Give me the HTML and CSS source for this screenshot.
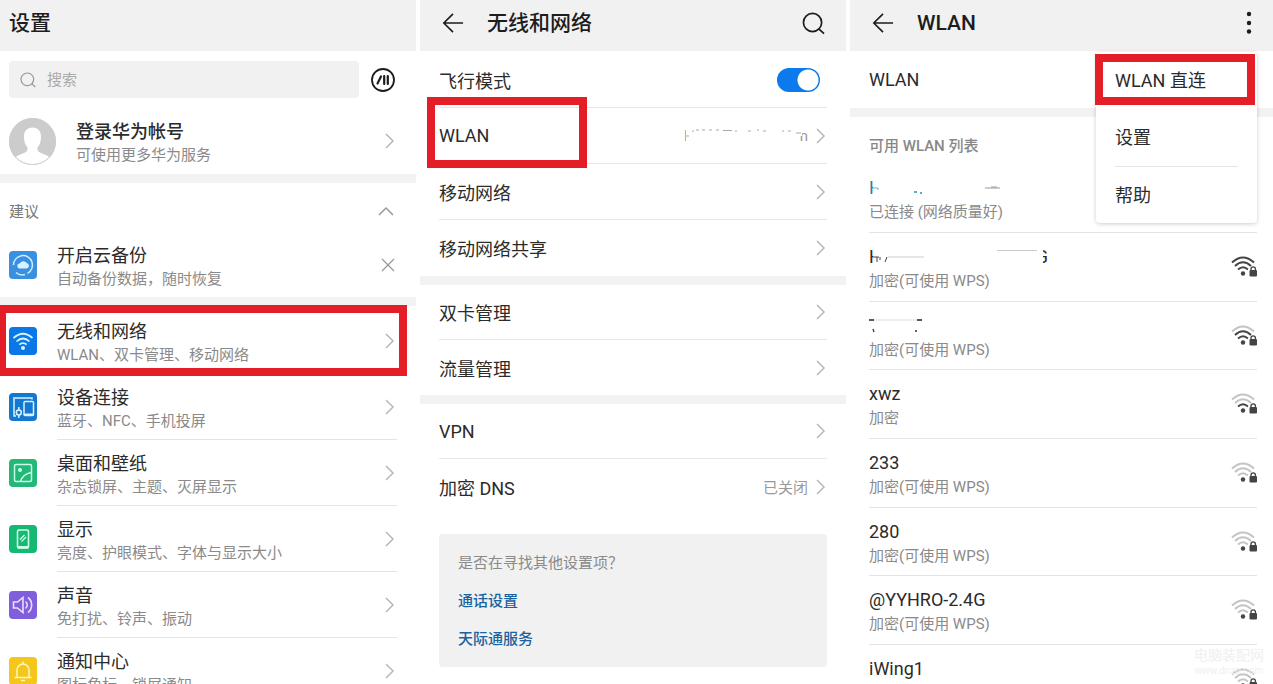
FILE: index.html
```html
<!DOCTYPE html>
<html lang="zh-CN">
<head>
  <meta charset="UTF-8">
  <meta name="viewport" content="width=device-width, initial-scale=1.0">
  <title>设置</title>
  <link rel="stylesheet" href="styles.css">
</head>
<body>

  <!-- Shared icons -->
  <svg class="sprite" aria-hidden="true">
    <symbol id="i-next" viewBox="0 0 10 18"><path d="M1 2l7 7-7 7" fill="none" stroke="currentColor" stroke-width="1.5"/></symbol>
    <symbol id="i-back" viewBox="0 0 24 24"><path d="M12 2L2 12l10 10M2 12h21" fill="none" stroke="currentColor" stroke-width="1.8"/></symbol>
    <symbol id="i-search" viewBox="0 0 24 24"><circle cx="11" cy="11" r="9.5" fill="none" stroke="currentColor" stroke-width="1.8"/><path d="M17.5 17.5l5.5 5" fill="none" stroke="currentColor" stroke-width="1.8"/></symbol>
    <symbol id="i-signal" viewBox="0 0 26 22">
      <g fill="none" stroke-width="2">
        <path class="arc3" d="M1 6.500Q12 -3.500 23 6.500"/>
        <path class="arc2" d="M4 10Q12 2.500 20 10"/>
        <path class="arc1" d="M7 13.500Q12 9 17 13.500"/>
      </g>
      <circle cx="12" cy="17.500" r="2.200" fill="#444"/>
      <path d="M17.500 12.500h8.500v8h-8.500z" fill="#fff"/>
      <rect x="18.500" y="14" width="7.500" height="6.500" rx="1" fill="#444"/>
      <path d="M20 14.500v-1.500a2.200 2.200 0 0 1 4.400 0v1.500" fill="none" stroke="#444" stroke-width="1.300"/>
    </symbol>
  </svg>

  <main class="screens">

    <!-- Settings home -->
    <section class="screen home">
      <header class="bar">
        <h1>设置</h1>
      </header>

      <div class="search">
        <label class="search-box">
          <svg class="search-icon" width="16" height="16"><use href="#i-search"/></svg>
          <input type="search" placeholder="搜索" aria-label="搜索">
        </label>
        <button class="voice" aria-label="智能助手">
          <svg width="24" height="24" viewBox="0 0 24 24">
            <circle cx="12" cy="12" r="11" fill="none" stroke="#1d1d1d" stroke-width="1.800"/>
            <path d="M6.500 15.500L10 8.500M13.200 8v8M16.800 8v8" fill="none" stroke="#1d1d1d" stroke-width="2.200" stroke-linecap="round"/>
          </svg>
        </button>
      </div>

      <a class="item account" href="#account">
        <svg class="avatar" width="47" height="47" viewBox="0 0 47 47">
          <circle cx="23.500" cy="23.500" r="23.500" fill="#ccc"/>
          <path d="M23.500 9.500c-5.500 0-8.500 3.500-8.500 9 0 5 1 8 3.500 11 .3 3-.5 4.500-3.500 5.500-3.500 1.200-6.500 2.500-8.500 4.300a23 23 0 0 0 34 0c-2-1.800-5-3.100-8.500-4.300-3-1-3.800-2.500-3.500-5.500 2.500-3 3.500-6 3.500-11 0-5.500-3-9-8.500-9z" fill="#fff"/>
          <circle cx="23.500" cy="23.500" r="23" fill="none" stroke="#ccc"/>
        </svg>
        <span class="text">
          <strong>登录华为帐号</strong>
          <small>可使用更多华为服务</small>
        </span>
        <svg class="next" width="10" height="18"><use href="#i-next"/></svg>
      </a>

      <div class="divider"></div>

      <button class="suggest">
        建议
        <svg width="16" height="10" viewBox="0 0 16 10"><path d="M1 9l7-7 7 7" fill="none" stroke="#999" stroke-width="1.500"/></svg>
      </button>
      <div class="item backup">
        <svg class="app" width="28" height="28" viewBox="0 0 28 28">
          <rect width="28" height="28" rx="4" fill="#3b8fe0"/>
          <path d="M4.500 14a9.500 9.500 0 1 1 14 8.400M4.500 14v-1M7 21.500a9.500 9.500 0 0 0 9 2" fill="none" stroke="#c9f1ff" stroke-width="1.500"/>
          <path d="M11 17.500a2.500 2.500 0 0 1-.3-5 4 4 0 0 1 7-.5 2.800 2.800 0 0 1 0 5.500z" fill="#d5f4ff"/>
        </svg>
        <span class="text">
          <strong>开启云备份</strong>
          <small>自动备份数据，随时恢复</small>
        </span>
        <button class="close" aria-label="关闭">
          <svg width="14" height="14" viewBox="0 0 14 14"><path d="M1 1l12 12M13 1L1 13" fill="none" stroke="#999" stroke-width="1.300"/></svg>
        </button>
      </div>

      <div class="divider"></div>

      <nav class="menu">
        <a class="item marked" href="#network">
          <svg class="app" width="28" height="28" viewBox="0 0 28 28">
            <rect width="28" height="28" rx="4" fill="#0a78e6"/>
            <path d="M4.500 11q9.500-8.500 19 0M7.500 14.500q6.500-6 13 0M10.300 17.700q3.700-3.300 7.400 0" fill="none" stroke="#d5f4ff" stroke-width="1.700"/>
            <circle cx="14" cy="21" r="2" fill="#d5f4ff"/>
          </svg>
          <span class="text">
            <strong>无线和网络</strong>
            <small>WLAN、双卡管理、移动网络</small>
          </span>
          <svg class="next" width="10" height="18"><use href="#i-next"/></svg>
        </a>
        <a class="item" href="#devices">
          <svg class="app" width="28" height="28" viewBox="0 0 28 28">
            <rect width="28" height="28" rx="4" fill="#1478d2"/>
            <g fill="none" stroke="#d5f4ff" stroke-width="1.500">
              <path d="M23 6.500V5H5v18h2M9.800 14v3M9.800 22v3"/>
              <circle cx="9.800" cy="19.500" r="2.500"/>
              <rect x="15" y="8.500" width="9.500" height="14" rx="1"/>
            </g>
            <path d="M15 20.500h9.500v2.500H15z" fill="#d5f4ff"/>
          </svg>
          <span class="text">
            <strong>设备连接</strong>
            <small>蓝牙、NFC、手机投屏</small>
          </span>
          <svg class="next" width="10" height="18"><use href="#i-next"/></svg>
        </a>
        <a class="item" href="#wallpaper">
          <svg class="app" width="28" height="28" viewBox="0 0 28 28">
            <rect width="28" height="28" rx="4" fill="#23b877"/>
            <rect x="5.500" y="5.500" width="17" height="17" rx="1.500" fill="none" stroke="#c9ffe6" stroke-width="1.500"/>
            <circle cx="11" cy="11" r="2" fill="#c9ffe6"/>
            <path d="M11.500 22.500c1.500-5 5-8 11-9" fill="none" stroke="#c9ffe6" stroke-width="1.500"/>
          </svg>
          <span class="text">
            <strong>桌面和壁纸</strong>
            <small>杂志锁屏、主题、灭屏显示</small>
          </span>
          <svg class="next" width="10" height="18"><use href="#i-next"/></svg>
        </a>
        <a class="item" href="#display">
          <svg class="app" width="28" height="28" viewBox="0 0 28 28">
            <rect width="28" height="28" rx="4" fill="#17b873"/>
            <rect x="8.500" y="5" width="11" height="18" rx="1.500" fill="none" stroke="#c9ffe6" stroke-width="1.600"/>
            <path d="M8.500 21h11v2.500h-11z" fill="#c9ffe6"/>
            <path d="M11 14.500l4.500-4.500M12.500 16.500l4.500-4.500" stroke="#c9ffe6" stroke-width="1.400"/>
          </svg>
          <span class="text">
            <strong>显示</strong>
            <small>亮度、护眼模式、字体与显示大小</small>
          </span>
          <svg class="next" width="10" height="18"><use href="#i-next"/></svg>
        </a>
        <a class="item" href="#sound">
          <svg class="app" width="28" height="28" viewBox="0 0 28 28">
            <rect width="28" height="28" rx="4" fill="#7f5fdb"/>
            <path d="M4.500 11h4l5.500-4.500v15L8.500 17h-4zM16.500 10.500a4.500 4.500 0 0 1 0 7M19 6.500a9.500 9.500 0 0 1 0 15" fill="none" stroke="#ecdcff" stroke-width="1.600"/>
          </svg>
          <span class="text">
            <strong>声音</strong>
            <small>免打扰、铃声、振动</small>
          </span>
          <svg class="next" width="10" height="18"><use href="#i-next"/></svg>
        </a>
        <a class="item" href="#notifications">
          <svg class="app" width="28" height="28" viewBox="0 0 28 28">
            <rect width="28" height="28" rx="4" fill="#f5c61c"/>
            <path d="M5.500 20.500h17M8 20.500V13a6 6 0 0 1 12 0v7.500M14 7V4.500M12 23.500h4" fill="none" stroke="#fff6b8" stroke-width="1.600"/>
          </svg>
          <span class="text">
            <strong>通知中心</strong>
            <small>图标角标、锁屏通知</small>
          </span>
          <svg class="next" width="10" height="18"><use href="#i-next"/></svg>
        </a>
      </nav>
    </section>

    <!-- Wireless and networks -->
    <section class="screen network">
      <header class="bar">
        <button class="back" aria-label="返回"><svg width="22" height="22"><use href="#i-back"/></svg></button>
        <h1>无线和网络</h1>
        <button class="tool" aria-label="搜索"><svg width="23" height="23"><use href="#i-search"/></svg></button>
      </header>

      <div class="rows tall">
        <div class="row">
          <label for="airplane">飞行模式</label>
          <input class="switch" type="checkbox" id="airplane" checked>
        </div>
        <a class="row marked" href="#wlan">
          <span>WLAN</span>
          <span class="value erased">
            H
            <svg width="121" height="18" viewBox="0 0 121 18">
              <path d="M0 0h108v18H0zM108 0h8v9h-8z" fill="#fff"/>
              <path d="M0 9h3M6 4h2M10 3h3M16 3h3M23 3h3M30 3h3M37 3.500h9M49 4h2M62 4h3M71 3h2M77 4h3M96 4h2M102 4h3M110 6h5" stroke="#aaa"/>
            </svg>
            n
          </span>
          <svg class="next" width="10" height="18"><use href="#i-next"/></svg>
        </a>
        <a class="row" href="#mobile">
          <span>移动网络</span>
          <svg class="next" width="10" height="18"><use href="#i-next"/></svg>
        </a>
        <a class="row" href="#tethering">
          <span>移动网络共享</span>
          <svg class="next" width="10" height="18"><use href="#i-next"/></svg>
        </a>
      </div>

      <div class="divider"></div>

      <div class="rows">
        <a class="row" href="#dual-sim">
          <span>双卡管理</span>
          <svg class="next" width="10" height="18"><use href="#i-next"/></svg>
        </a>
        <a class="row" href="#data">
          <span>流量管理</span>
          <svg class="next" width="10" height="18"><use href="#i-next"/></svg>
        </a>
      </div>

      <div class="divider"></div>

      <div class="rows">
        <a class="row" href="#vpn">
          <span>VPN</span>
          <svg class="next" width="10" height="18"><use href="#i-next"/></svg>
        </a>
        <a class="row" href="#dns">
          <span>加密 DNS</span>
          <span class="value">已关闭</span>
          <svg class="next" width="10" height="18"><use href="#i-next"/></svg>
        </a>
      </div>

      <aside class="more">
        <p>是否在寻找其他设置项？</p>
        <a href="#call">通话设置</a>
        <a href="#skytone">天际通服务</a>
      </aside>
    </section>

    <!-- WLAN -->
    <section class="screen wlan">
      <header class="bar">
        <button class="back" aria-label="返回"><svg width="22" height="22"><use href="#i-back"/></svg></button>
        <h1>WLAN</h1>
        <button class="tool" aria-label="更多">
          <svg width="6" height="24" viewBox="0 0 6 24"><g fill="#1d1d1d"><circle cx="3" cy="3" r="2.200"/><circle cx="3" cy="12" r="2.200"/><circle cx="3" cy="20.500" r="2.200"/></g></svg>
        </button>
      </header>

      <div class="current">WLAN</div>
      <div class="divider"></div>
      <h2>可用 WLAN 列表</h2>

      <ul class="spots">
        <li class="connected">
          <span class="spot">
            <strong class="erased">
              H
              <svg width="160" height="18" viewBox="0 0 160 18">
                <path d="M0 0h160v18H0z" fill="#fff"/>
                <path d="M0 9h5v2" fill="none" stroke="#6fb3c8"/>
                <path d="M41 13h3M47 14h2" stroke="#2a8fae" stroke-width="1.500"/>
                <path d="M112 9h15M118 8h6" stroke="#999"/>
              </svg>
            </strong>
            <small>已连接 (网络质量好)</small>
          </span>
        </li>
        <li>
          <span class="spot">
            <strong class="erased">
              H
              <svg width="170" height="18" viewBox="0 0 170 18">
                <path d="M0 0h170v18H0z" fill="#fff"/>
                <path d="M0 9h6M4 9v5M7 9v3M12 14l2-5" stroke="#444" fill="none"/>
                <path d="M15 9h36M124 2.500h40" stroke="#ccc"/>
              </svg>
              G
            </strong>
            <small>加密(可使用 WPS)</small>
          </span>
          <svg class="signal s3" width="26" height="22"><use href="#i-signal"/></svg>
        </li>
        <li>
          <span class="spot">
            <strong class="erased">
              <svg class="dashes" width="54" height="18" viewBox="0 0 54 18">
                <path d="M0 4h5M48 4h5" stroke="#222" stroke-width="1.500"/>
                <path d="M5 4h43" stroke="#ddd"/>
                <path d="M4 13l1 3M46 15h2" stroke="#333" stroke-width="1.300"/>
              </svg>
            </strong>
            <small>加密(可使用 WPS)</small>
          </span>
          <svg class="signal s2" width="26" height="22"><use href="#i-signal"/></svg>
        </li>
        <li>
          <span class="spot"><strong>xwz</strong><small>加密</small></span>
          <svg class="signal s1" width="26" height="22"><use href="#i-signal"/></svg>
        </li>
        <li>
          <span class="spot"><strong>233</strong><small>加密(可使用 WPS)</small></span>
          <svg class="signal" width="26" height="22"><use href="#i-signal"/></svg>
        </li>
        <li>
          <span class="spot"><strong>280</strong><small>加密(可使用 WPS)</small></span>
          <svg class="signal" width="26" height="22"><use href="#i-signal"/></svg>
        </li>
        <li>
          <span class="spot"><strong>@YYHRO-2.4G</strong><small>加密(可使用 WPS)</small></span>
          <svg class="signal" width="26" height="22"><use href="#i-signal"/></svg>
        </li>
        <li>
          <span class="spot"><strong>iWing1</strong><small>加密</small></span>
          <svg class="signal" width="26" height="22"><use href="#i-signal"/></svg>
        </li>
      </ul>

      <div class="popup">
        <a class="marked" href="#direct">WLAN 直连</a>
        <a href="#wlan-settings">设置</a>
        <a href="#help">帮助</a>
      </div>

      <div class="watermark">电脑装配网<small>www.dnzp.com</small></div>
    </section>

  </main>

</body>
</html>
```
FILE: styles.css
```css
*, *::before, *::after {
  box-sizing: border-box;
  margin: 0;
  padding: 0;
}

body {
  font-family: Roboto, "Noto Sans CJK SC", sans-serif;
  font-size: 18px;
  color: #2b2b2b;
  background-color: #fff;
}

a {
  color: inherit;
  text-decoration: none;
}

button {
  font: inherit;
  color: inherit;
  background: none;
  border: none;
  cursor: pointer;
}

svg {
  display: block;
  flex: none;
}

strong {
  font-weight: 400;
}

small {
  font-size: 15px;
  color: #8a8a8a;
}

.sprite {
  position: absolute;
  width: 0;
  height: 0;
}

.screens {
  display: grid;
  grid-template-columns: 416fr 426fr 423fr;
  gap: 4px;
  height: 100vh;
}

.screen {
  position: relative;
  min-width: 0;
  overflow-x: hidden;
  overflow-y: auto;
  scrollbar-width: none;
}

/* Top bar */
.bar {
  display: flex;
  align-items: center;
  height: 51px;
  padding: 0 21px 5px 22px;
  background-color: #f1f1f1;
  color: #1d1d1d;
}

.home .bar {
  padding-left: 9px;
}

.bar h1 {
  font-size: 21px;
  font-weight: 500;
  line-height: 24px;
}

.back {
  margin-right: 23px;
}

.tool {
  margin-left: auto;
}

.divider {
  height: 9px;
  background-color: #f2f2f2;
}

.next {
  color: #b8b8b8;
}

/* Red frame round the entry to tap */
.marked {
  position: relative;
}

.marked::after {
  content: "";
  position: absolute;
  border: 8px solid #e31e26;
  z-index: 2;
}

/* Settings home */
.search {
  display: flex;
  align-items: center;
  gap: 12px;
  padding: 10px 21px 10px 9px;
}

.search-box {
  flex: 1;
  display: flex;
  align-items: center;
  gap: 11px;
  height: 37px;
  padding: 0 11px;
  background-color: #f1f1f1;
  border-radius: 4px;
}

.search-icon {
  color: #999;
}

.search-box input {
  flex: 1;
  min-width: 0;
  font: inherit;
  font-size: 15px;
  background: none;
  border: none;
  outline: none;
}

.search-box input::placeholder {
  color: #aaa;
}

.item {
  display: flex;
  align-items: center;
  height: 66px;
  padding: 0 21px 0 9px;
}

.item .text {
  flex: 1;
  align-self: stretch;
  display: flex;
  flex-direction: column;
  justify-content: center;
  padding-top: 3px;
  margin-left: 20px;
}

.text strong {
  line-height: 24px;
}

.text small {
  line-height: 22px;
}

.account strong {
  font-weight: 500;
}

.item.backup {
  height: 64px;
}

.suggest {
  display: flex;
  align-items: center;
  justify-content: space-between;
  width: 100%;
  height: 50px;
  padding: 5px 22px 0 9px;
  font-size: 15px;
  color: #777;
}

.menu {
  padding-top: 2px;
}

.menu .item {
  position: relative;
}

.menu .item + .item::before {
  content: "";
  position: absolute;
  left: 57px;
  right: 19px;
  bottom: 0;
  height: 1px;
  background-color: #e4e4e4;
}

.menu .marked::after {
  top: -3px;
  bottom: -2px;
  left: 0;
  right: 9px;
  border-left-width: 6px;
}

/* Wireless and networks */
.rows {
  padding: 0 19px;
}

.rows.tall {
  padding-top: 1px;
}

.row {
  display: flex;
  align-items: center;
  gap: 8px;
  height: 55px;
  border-bottom: 1px solid #e8e8e8;
}

.tall .row {
  height: 56px;
}

.row:last-child {
  border-bottom: none;
}

.row > :first-child {
  flex: 1;
}

.row .next {
  margin-right: 1px;
}

.row.marked::after {
  top: -11px;
  bottom: -5px;
  left: -12px;
  width: 160px;
}

.value {
  font-size: 15px;
  color: #999;
}

/* Names that are rubbed out apart from a few strokes */
.erased {
  display: flex;
  align-items: center;
}

.erased svg {
  position: relative;
  margin-left: -9px;
  margin-right: -7px;
}

.erased .dashes {
  margin-left: 0;
}

.switch {
  appearance: none;
  width: 43px;
  height: 24px;
  margin-right: 7px;
  border-radius: 12px;
  background: radial-gradient(circle at 31px 12px, #fff 10px, #0a7aec 11px);
}

.more {
  margin: 20px 19px 0;
  padding: 10px 19px 9px;
  border-radius: 4px;
  background-color: #f1f1f1;
  font-size: 15px;
  line-height: 38px;
}

.more p {
  color: #8a8a8a;
}

.more a {
  display: block;
  font-weight: 500;
  color: #1a62a0;
}

/* WLAN */
.current {
  height: 57px;
  padding-left: 19px;
  line-height: 58px;
}

.wlan h2 {
  height: 47px;
  padding-left: 19px;
  font-size: 15px;
  font-weight: 500;
  line-height: 58px;
  color: #888;
}

.spots {
  margin: 0 16px 0 19px;
  list-style: none;
}

.spots li {
  display: flex;
  align-items: center;
  justify-content: space-between;
  height: 69px;
  border-bottom: 1px solid #e4e4e4;
}

.spots li:nth-child(3n) {
  height: 68px;
}

.spot {
  display: flex;
  flex-direction: column;
  padding-top: 3px;
}

.spot strong {
  height: 25px;
  line-height: 25px;
}

.spot small {
  line-height: 24px;
}

.connected strong {
  color: #1c86a8;
}

/* Signal strength: arcs are grey until a level turns them on */
.arc1 { stroke: var(--a1, #c4c4c4); }
.arc2 { stroke: var(--a2, #c4c4c4); }
.arc3 { stroke: var(--a3, #c4c4c4); }

.s1, .s2, .s3 { --a1: #444; }
.s2, .s3 { --a2: #444; }
.s3 { --a3: #444; }

.popup {
  position: absolute;
  top: 52px;
  right: 16px;
  width: 161px;
  padding: 0 19px;
  background-color: #fff;
  border-radius: 4px;
  box-shadow: 0 1px 4px rgba(0, 0, 0, 0.2);
}

.popup a {
  display: block;
  height: 57px;
  line-height: 57px;
}

.popup a + a + a {
  border-top: 1px solid #e4e4e4;
}

.popup .marked::after {
  top: 2px;
  bottom: 4px;
  left: -20px;
  right: -17px;
}

.watermark {
  position: absolute;
  right: 9px;
  top: 647px;
  font-size: 14px;
  line-height: 16px;
  text-align: center;
  color: #f0f0f0;
}

.watermark small {
  display: block;
  font-size: 10px;
  color: inherit;
}
```
